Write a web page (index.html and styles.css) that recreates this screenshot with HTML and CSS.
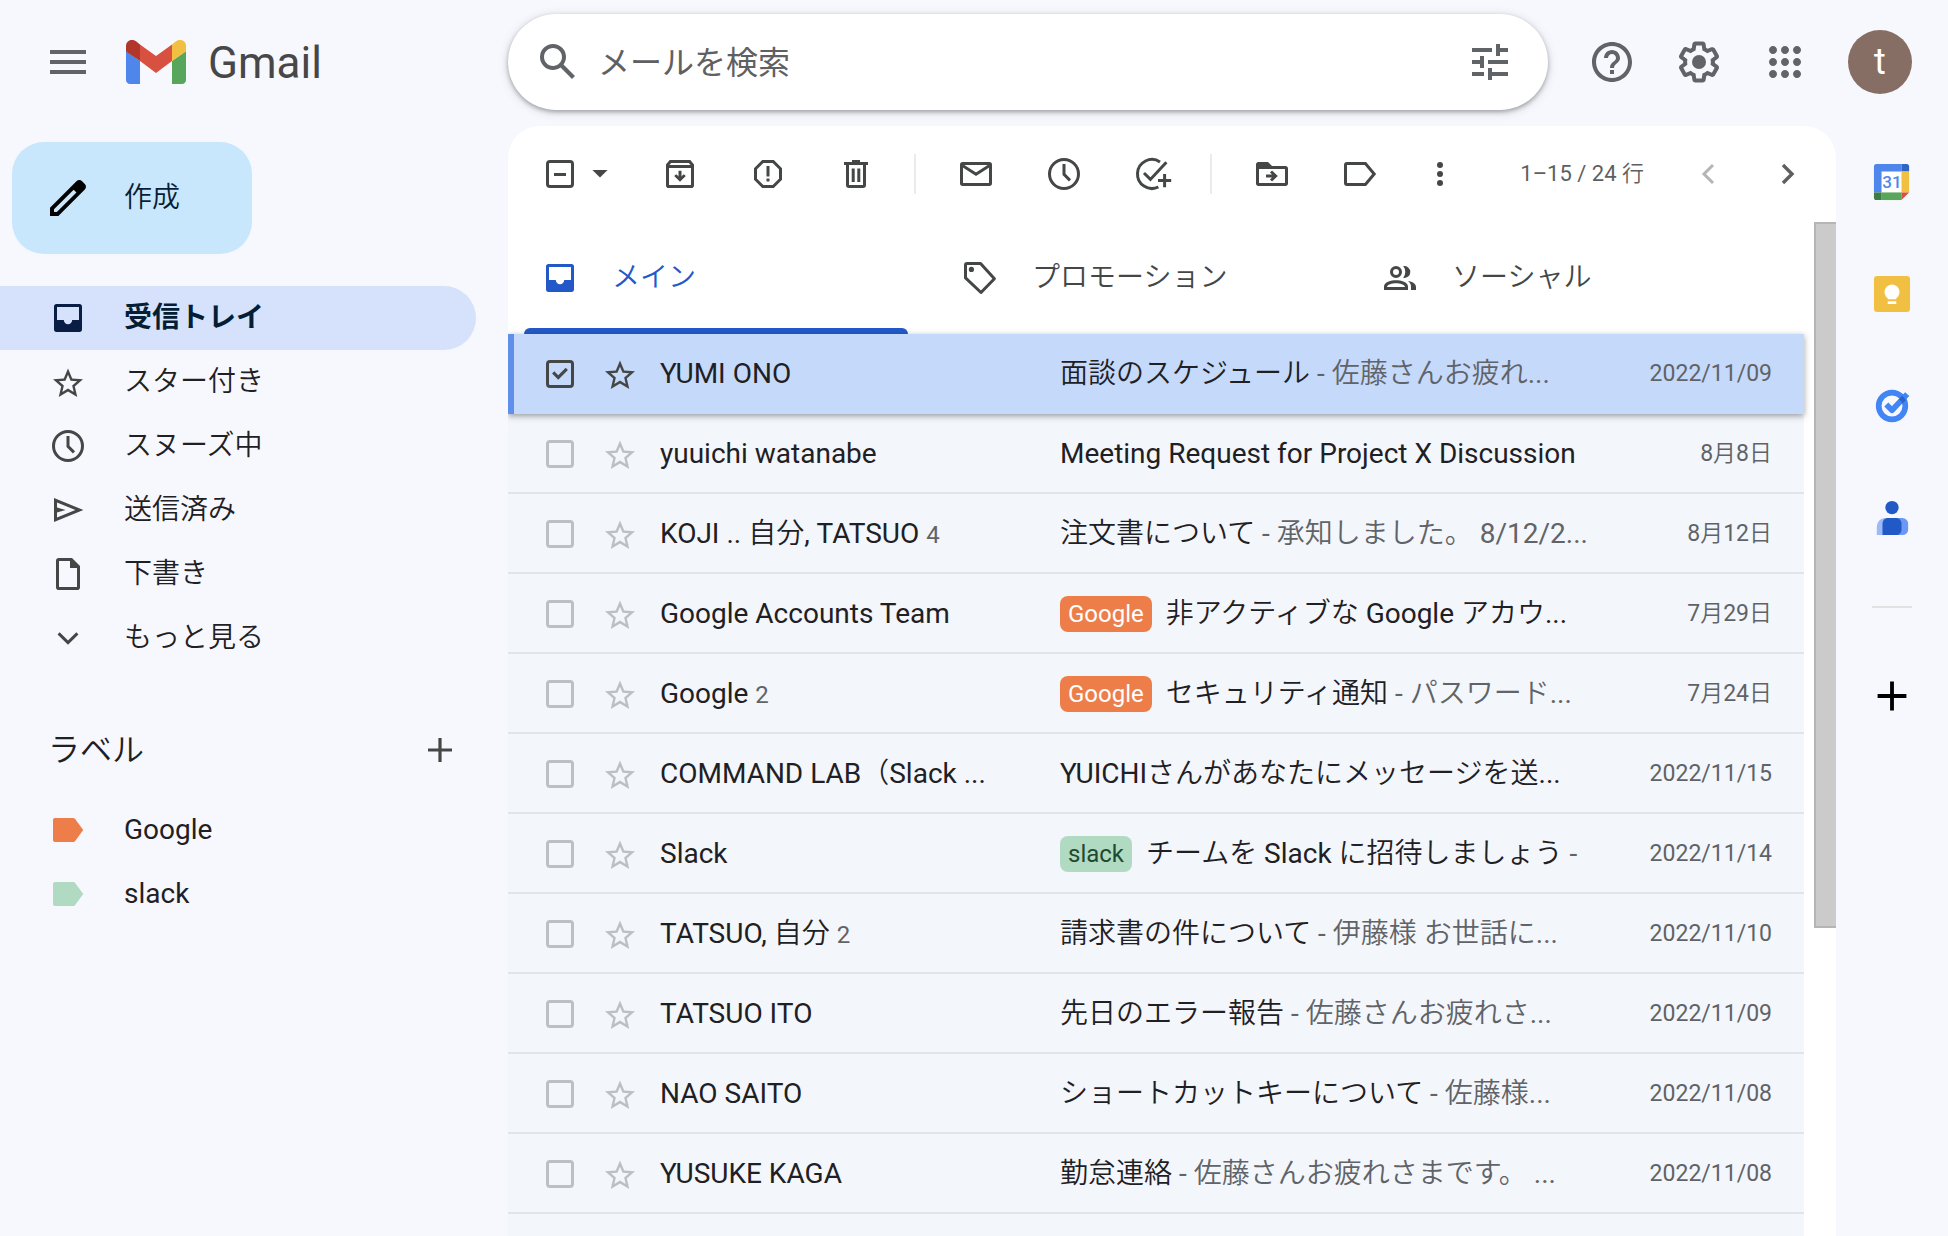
FILE: index.html
```html
<!DOCTYPE html>
<html lang="ja">
<head>
  <meta charset="UTF-8">
  <meta name="viewport" content="width=device-width, initial-scale=1.0">
  <title>Gmail</title>
  <link rel="stylesheet" href="styles.css">
</head>
<body>

<!-- Icon sprite -->
<svg class="sprite" aria-hidden="true">
  <symbol id="i-menu" viewBox="0 0 24 24"><path d="M3 18h18v-2H3v2zm0-5h18v-2H3v2zm0-7v2h18V6H3z"/></symbol>
  <symbol id="i-pencil" viewBox="0 0 24 24"><path d="M20.41 4.94l-1.35-1.35c-.78-.78-2.05-.78-2.83 0L3 16.82V21h4.18L20.41 7.77c.79-.78.79-2.05 0-2.83zM6.41 19.06L5 19v-1.36l9.82-9.82 1.41 1.41-9.82 9.83z"/></symbol>
  <symbol id="i-search" viewBox="0 0 24 24"><path d="M20.49 19l-5.73-5.73C15.53 12.2 16 10.91 16 9.5A6.5 6.5 0 1 0 9.5 16c1.41 0 2.7-.47 3.77-1.24L19 20.49 20.49 19zM5 9.5C5 7.01 7.01 5 9.5 5S14 7.01 14 9.5 11.99 14 9.5 14 5 11.99 5 9.5z"/></symbol>
  <symbol id="i-tune" viewBox="0 0 24 24"><path d="M3 17v2h6v-2H3zM3 5v2h10V5H3zm10 16v-2h8v-2h-8v-2h-2v6h2zM7 9v2H3v2h4v2h2V9H7zm14 4v-2H11v2h10zm-6-4h2V7h4V5h-4V3h-2v6z"/></symbol>
  <symbol id="i-help" viewBox="0 0 24 24"><path d="M11 18h2v-2h-2v2zm1-16C6.48 2 2 6.48 2 12s4.48 10 10 10 10-4.48 10-10S17.52 2 12 2zm0 18c-4.41 0-8-3.59-8-8s3.59-8 8-8 8 3.59 8 8-3.59 8-8 8zm0-14c-2.21 0-4 1.79-4 4h2c0-1.1.9-2 2-2s2 .9 2 2c0 2-3 1.75-3 5h2c0-2.25 3-2.5 3-5 0-2.21-1.79-4-4-4z"/></symbol>
  <symbol id="i-gear" viewBox="0 0 24 24"><path d="M13.85 22.25h-3.7c-.74 0-1.36-.54-1.45-1.27l-.27-1.89c-.27-.14-.53-.29-.79-.46l-1.8.72c-.7.26-1.47-.03-1.81-.65L2.2 15.53c-.35-.66-.2-1.44.36-1.88l1.53-1.19c-.01-.15-.02-.3-.02-.46 0-.15.01-.31.02-.46l-1.52-1.19c-.59-.45-.74-1.26-.37-1.88l1.85-3.19c.34-.62 1.11-.9 1.79-.63l1.81.73c.26-.17.52-.32.78-.46l.27-1.91c.09-.7.71-1.25 1.44-1.25h3.7c.74 0 1.36.54 1.45 1.27l.27 1.89c.27.14.53.29.79.46l1.8-.72c.71-.26 1.48.03 1.82.65l1.84 3.18c.36.66.2 1.44-.36 1.88l-1.52 1.19c.01.15.02.3.02.46s-.01.31-.02.46l1.52 1.19c.56.45.72 1.23.37 1.86l-1.86 3.22c-.34.62-1.11.9-1.8.63l-1.8-.72c-.26.17-.52.32-.78.46l-.27 1.91c-.1.68-.72 1.22-1.46 1.22zm-3.23-2h2.76l.37-2.55.53-.22c.44-.18.88-.44 1.34-.78l.45-.34 2.38.96 1.38-2.4-2.03-1.58.07-.56c.03-.26.06-.51.06-.78s-.03-.53-.06-.78l-.07-.56 2.03-1.58-1.39-2.4-2.39.96-.45-.35c-.42-.32-.87-.58-1.33-.77l-.52-.22-.37-2.55h-2.76l-.37 2.55-.53.21c-.44.19-.88.44-1.34.79l-.45.33-2.38-.95-1.39 2.39 2.03 1.58-.07.56a7 7 0 0 0-.06.79c0 .26.02.53.06.78l.07.56-2.03 1.58 1.38 2.4 2.39-.96.45.35c.43.33.86.58 1.33.77l.53.22.38 2.55z"/><circle cx="12" cy="12" r="3.5"/></symbol>
  <symbol id="i-apps" viewBox="0 0 24 24"><path d="M6 8c1.1 0 2-.9 2-2s-.9-2-2-2-2 .9-2 2 .9 2 2 2zm6 12c1.1 0 2-.9 2-2s-.9-2-2-2-2 .9-2 2 .9 2 2 2zm-6 0c1.1 0 2-.9 2-2s-.9-2-2-2-2 .9-2 2 .9 2 2 2zm0-6c1.1 0 2-.9 2-2s-.9-2-2-2-2 .9-2 2 .9 2 2 2zm6 0c1.1 0 2-.9 2-2s-.9-2-2-2-2 .9-2 2 .9 2 2 2zm4-8c0 1.1.9 2 2 2s2-.9 2-2-.9-2-2-2-2 .9-2 2zm-4 2c1.1 0 2-.9 2-2s-.9-2-2-2-2 .9-2 2 .9 2 2 2zm6 6c1.1 0 2-.9 2-2s-.9-2-2-2-2 .9-2 2 .9 2 2 2zm0 6c1.1 0 2-.9 2-2s-.9-2-2-2-2 .9-2 2 .9 2 2 2z"/></symbol>

  <symbol id="i-inbox" viewBox="0 0 20 20"><path fill-rule="evenodd" d="M4.2 3h11.6c.7 0 1.2.5 1.2 1.2v11.6c0 .7-.5 1.2-1.2 1.2H4.2c-.7 0-1.2-.5-1.2-1.2V4.2C3 3.5 3.5 3 4.2 3zm.3 1.5V11h3.4a2.1 2.1 0 0 0 4.2 0h3.4V4.5z"/></symbol>
  <symbol id="i-star" viewBox="0 -1 24 24"><path d="M22 9.24l-7.19-.62L12 2 9.19 8.63 2 9.24l5.46 4.73L5.82 21 12 17.27 18.18 21l-1.63-7.03L22 9.24zM12 15.4l-3.76 2.27 1-4.28-3.32-2.88 4.38-.38L12 6.1l1.71 4.04 4.38.38-3.32 2.88 1 4.28L12 15.4z"/></symbol>
  <symbol id="i-clock" viewBox="0 0 20 20"><g fill="none" stroke="currentColor" stroke-width="1.5"><circle cx="10" cy="10" r="7.25"/><path d="M10 5v5.2l3 3"/></g></symbol>
  <symbol id="i-send" viewBox="0 0 20 20"><path fill-rule="evenodd" d="M3 16V4l14.7 6L3 16zm1.5-2.25L13.7 10 4.5 6.25v2.5L8.8 10l-4.3 1.25v2.5z"/></symbol>
  <symbol id="i-draft" viewBox="0 0 20 20"><path fill-rule="evenodd" d="M5.3 2H12l4 4v10.7c0 .7-.6 1.3-1.3 1.3H5.3C4.6 18 4 17.4 4 16.7V3.3C4 2.6 4.6 2 5.3 2zm.2 1.5v13h9V7H11V3.5z"/></symbol>
  <symbol id="i-down" viewBox="0 0 20 20"><path fill="none" stroke="currentColor" stroke-width="1.5" d="M5.3 7.7L10 12.3l4.7-4.6"/></symbol>
  <symbol id="i-left" viewBox="0 0 20 20"><path fill="none" stroke="currentColor" stroke-width="1.5" d="M12.5 5.5L8 10l4.5 4.5"/></symbol>
  <symbol id="i-right" viewBox="0 0 20 20"><path fill="none" stroke="currentColor" stroke-width="1.7" d="M7.5 5.5L12 10l-4.5 4.5"/></symbol>
  <symbol id="i-plus" viewBox="0 0 20 20"><path fill="none" stroke="currentColor" stroke-width="1.6" d="M10 4v12M4 10h12"/></symbol>
  <symbol id="i-tag" viewBox="0 0 20 20"><path d="M3.5 4h9c.5 0 .8.2 1.1.5L17.6 10l-4 5.5c-.3.3-.6.5-1.1.5h-9c-.6 0-1-.4-1-1V5c0-.6.4-1 1-1z"/></symbol>

  <symbol id="i-caret" viewBox="0 0 20 20"><path d="M6.2 8h7.6L10 11.8z"/></symbol>
  <symbol id="i-archive" viewBox="0 0 20 20"><g fill="none" stroke="currentColor" stroke-width="1.5"><path d="M3.75 5.5L5.2 3.75h9.6l1.45 1.75v10.1c0 .4-.25.65-.65.65H4.4c-.4 0-.65-.25-.65-.65z"/><path d="M3.5 6.3h13M10 8.4v4"/></g><path d="M7.1 11l1-.9L10 11.8l1.9-1.7 1 .9-2.9 2.9z"/></symbol>
  <symbol id="i-spam" viewBox="0 0 20 20"><path fill="none" stroke="currentColor" stroke-width="1.5" d="M7.4 3.75h5.2l3.65 3.65v5.2l-3.65 3.65H7.4L3.75 12.6V7.4z"/><path d="M9.25 6h1.5v5.2h-1.5zM9.25 12.2h1.5v1.5h-1.5z"/></symbol>
  <symbol id="i-trash" viewBox="0 0 20 20"><path fill="none" stroke="currentColor" stroke-width="1.5" d="M4 4.75h12M8 3.75h4M5.75 5v10.5c0 .5.25.75.75.75h7c.5 0 .75-.25.75-.75V5M8.6 7.2V14M11.4 7.2V14"/></symbol>
  <symbol id="i-mail" viewBox="0 0 20 20"><g fill="none" stroke="currentColor" stroke-width="1.5"><rect x="2.75" y="4.75" width="14.5" height="10.5" rx=".6"/><path d="M3 5.6l7 4.5 7-4.5"/></g></symbol>
  <symbol id="i-task-add" viewBox="0 0 20 20"><g fill="none" stroke="currentColor" stroke-width="1.5"><path d="M14 3.95A7.25 7.25 0 1 0 13.2 16.5M6 9.5l3.2 3.2 8-8.6M16.3 10v6.6M13 13.3h6.6"/></g></symbol>
  <symbol id="i-move" viewBox="0 0 20 20"><path fill-rule="evenodd" d="M3.2 4H8l2 2h6.8c.7 0 1.2.5 1.2 1.2v7.6c0 .7-.5 1.2-1.2 1.2H3.2c-.7 0-1.2-.5-1.2-1.2V5.2C2 4.5 2.5 4 3.2 4zm.3 3.5v7h13v-7z"/><path d="M7 10.25h3l-1-1 1-1L12.9 11 10 13.8l-1-1 1-1H7z"/></symbol>
  <symbol id="i-label" viewBox="0 0 20 20"><path fill="none" stroke="currentColor" stroke-width="1.5" d="M3.5 4.75h9.2L17.1 10l-4.4 5.25H3.5c-.5 0-.75-.25-.75-.75v-9c0-.5.25-.75.75-.75z"/></symbol>
  <symbol id="i-more" viewBox="0 0 20 20"><circle cx="10" cy="5.5" r="1.5"/><circle cx="10" cy="10" r="1.5"/><circle cx="10" cy="14.5" r="1.5"/></symbol>
  <symbol id="i-offer" viewBox="0 0 20 20"><path fill="none" stroke="currentColor" stroke-width="1.5" stroke-linejoin="round" d="M3.5 2.75h6.8l6.9 7.6-6.7 6.9-7.75-7.3V3.5c0-.5.25-.75.75-.75z"/><circle cx="5.7" cy="5.7" r="1.3"/></symbol>
  <symbol id="i-people" viewBox="0 0 20 20"><circle cx="8" cy="7" r="2.25" fill="none" stroke="currentColor" stroke-width="1.5"/><path d="M11.6 4.05A3 3 0 1 1 11.6 9.95 4.7 4.7 0 0 0 11.6 4.05z"/><path fill-rule="evenodd" d="M2 16v-1.8C2 12 5.5 11.1 8 11.1s6 .9 6 3.1V16zm1.5-1.5h9c0-1.2-2.6-1.9-4.5-1.9s-4.5.7-4.5 1.9zM14 11.5c2.2.4 4 1.3 4 2.9V16h-2.5v-1.8c0-1.1-.6-2-1.5-2.7z"/></symbol>
</svg>

<header class="header">
  <div class="brand">
    <button class="icon-btn" aria-label="メインメニュー"><svg class="icon-lg"><use href="#i-menu"/></svg></button>
    <a class="logo" href="#">
      <svg class="logo-mark" viewBox="0 0 60 44" aria-hidden="true">
        <path fill="#4f86ec" d="M4 44h10V21L0 11v29c0 2.2 1.8 4 4 4z"/>
        <path fill="#58a55c" d="M46 44h10c2.2 0 4-1.8 4-4V11L46 21z"/>
        <path fill="#f1bf42" d="M46 4.5V21l14-9.5V6c0-5-5.7-7.9-9.7-4.9z"/>
        <path fill="#d85140" d="M14 21V4.5L30 16 46 4.5V21L30 33z"/>
        <path fill="#b3362a" d="M0 6v5.5L14 21V4.5L9.7 1.1C5.6-1.9 0 1 0 6z"/>
      </svg>
      <span class="logo-text">Gmail</span>
    </a>
  </div>
  <form class="search" role="search">
    <button type="button" class="icon-btn" aria-label="検索"><svg class="icon-lg"><use href="#i-search"/></svg></button>
    <input class="search-input" type="text" placeholder="メールを検索" aria-label="メールを検索">
    <button type="button" class="icon-btn" aria-label="検索オプション"><svg class="icon-lg"><use href="#i-tune"/></svg></button>
  </form>
  <div class="header-actions">
    <button class="icon-btn" aria-label="サポート"><svg class="icon-lg"><use href="#i-help"/></svg></button>
    <button class="icon-btn" aria-label="設定"><svg class="icon-lg"><use href="#i-gear"/></svg></button>
    <button class="icon-btn" aria-label="Google アプリ"><svg class="icon-lg"><use href="#i-apps"/></svg></button>
    <button class="avatar">t</button>
  </div>
</header>

<div class="layout">
  <nav class="sidebar">
    <button class="compose"><svg class="icon-lg"><use href="#i-pencil"/></svg>作成</button>
    <ul class="nav-list">
      <li><a class="nav-item active" href="#"><svg class="icon"><use href="#i-inbox"/></svg>受信トレイ</a></li>
      <li><a class="nav-item" href="#"><svg class="icon icon-star"><use href="#i-star"/></svg>スター付き</a></li>
      <li><a class="nav-item" href="#"><svg class="icon"><use href="#i-clock"/></svg>スヌーズ中</a></li>
      <li><a class="nav-item" href="#"><svg class="icon"><use href="#i-send"/></svg>送信済み</a></li>
      <li><a class="nav-item" href="#"><svg class="icon"><use href="#i-draft"/></svg>下書き</a></li>
      <li><a class="nav-item" href="#"><svg class="icon"><use href="#i-down"/></svg>もっと見る</a></li>
    </ul>
    <div class="labels-head">
      <h2>ラベル</h2>
      <button class="icon-btn" aria-label="新しいラベルを作成"><svg class="icon"><use href="#i-plus"/></svg></button>
    </div>
    <ul class="nav-list">
      <li><a class="nav-item" href="#"><svg class="icon tag-orange"><use href="#i-tag"/></svg>Google</a></li>
      <li><a class="nav-item" href="#"><svg class="icon tag-green"><use href="#i-tag"/></svg>slack</a></li>
    </ul>
  </nav>

  <main class="card">
    <div class="toolbar">
      <div class="select-all">
        <input class="check check-partial" type="checkbox" aria-label="選択">
        <button class="caret-btn" aria-label="選択メニュー"><svg class="icon"><use href="#i-caret"/></svg></button>
      </div>
      <div class="tool-group">
        <button class="tool" aria-label="アーカイブ"><svg class="icon"><use href="#i-archive"/></svg></button>
        <button class="tool" aria-label="迷惑メールを報告"><svg class="icon"><use href="#i-spam"/></svg></button>
        <button class="tool" aria-label="削除"><svg class="icon"><use href="#i-trash"/></svg></button>
      </div>
      <div class="tool-group">
        <button class="tool" aria-label="未読にする"><svg class="icon"><use href="#i-mail"/></svg></button>
        <button class="tool" aria-label="スヌーズ"><svg class="icon"><use href="#i-clock"/></svg></button>
        <button class="tool" aria-label="ToDo リストに追加"><svg class="icon"><use href="#i-task-add"/></svg></button>
      </div>
      <div class="tool-group">
        <button class="tool" aria-label="移動"><svg class="icon"><use href="#i-move"/></svg></button>
        <button class="tool" aria-label="ラベル"><svg class="icon"><use href="#i-label"/></svg></button>
        <button class="tool tool-narrow" aria-label="その他"><svg class="icon"><use href="#i-more"/></svg></button>
      </div>
      <div class="pager">
        <span>1–15 / 24 行</span>
        <button class="tool" aria-label="前" disabled><svg class="icon"><use href="#i-left"/></svg></button>
        <button class="tool" aria-label="次"><svg class="icon"><use href="#i-right"/></svg></button>
      </div>
    </div>

    <div class="scroll-area">
      <div class="list">
        <div class="tabs">
          <button class="tab active"><svg class="icon"><use href="#i-inbox"/></svg>メイン</button>
          <button class="tab"><svg class="icon"><use href="#i-offer"/></svg>プロモーション</button>
          <button class="tab"><svg class="icon"><use href="#i-people"/></svg>ソーシャル</button>
        </div>

        <table class="mails">
          <colgroup>
            <col class="col-check">
            <col class="col-star">
            <col class="col-sender">
            <col>
            <col class="col-date">
          </colgroup>
          <tbody>
          <tr class="mail selected">
            <td><input class="check" type="checkbox" aria-label="YUMI ONO" checked></td>
            <td><button class="star" aria-label="スター"><svg class="icon icon-star"><use href="#i-star"/></svg></button></td>
            <td>YUMI ONO</td>
            <td><a href="#">面談のスケジュール<span class="snippet"> - 佐藤さんお疲れ...</span></a></td>
            <td class="date">2022/11/09</td>
          </tr>
          <tr class="mail">
            <td><input class="check" type="checkbox" aria-label="yuuichi watanabe"></td>
            <td><button class="star" aria-label="スター"><svg class="icon icon-star"><use href="#i-star"/></svg></button></td>
            <td>yuuichi watanabe</td>
            <td><a href="#">Meeting Request for Project X Discussion</a></td>
            <td class="date">8月8日</td>
          </tr>
          <tr class="mail">
            <td><input class="check" type="checkbox" aria-label="KOJI"></td>
            <td><button class="star" aria-label="スター"><svg class="icon icon-star"><use href="#i-star"/></svg></button></td>
            <td>KOJI .. 自分, TATSUO <span class="count">4</span></td>
            <td><a href="#">注文書について<span class="snippet"> - 承知しました。 8/12/2...</span></a></td>
            <td class="date">8月12日</td>
          </tr>
          <tr class="mail">
            <td><input class="check" type="checkbox" aria-label="Google Accounts Team"></td>
            <td><button class="star" aria-label="スター"><svg class="icon icon-star"><use href="#i-star"/></svg></button></td>
            <td>Google Accounts Team</td>
            <td><a href="#"><span class="chip chip-orange">Google</span>非アクティブな Google アカウ...</a></td>
            <td class="date">7月29日</td>
          </tr>
          <tr class="mail">
            <td><input class="check" type="checkbox" aria-label="Google"></td>
            <td><button class="star" aria-label="スター"><svg class="icon icon-star"><use href="#i-star"/></svg></button></td>
            <td>Google <span class="count">2</span></td>
            <td><a href="#"><span class="chip chip-orange">Google</span>セキュリティ通知<span class="snippet"> - パスワード...</span></a></td>
            <td class="date">7月24日</td>
          </tr>
          <tr class="mail">
            <td><input class="check" type="checkbox" aria-label="COMMAND LAB"></td>
            <td><button class="star" aria-label="スター"><svg class="icon icon-star"><use href="#i-star"/></svg></button></td>
            <td>COMMAND LAB（Slack ...</td>
            <td><a href="#">YUICHIさんがあなたにメッセージを送...</a></td>
            <td class="date">2022/11/15</td>
          </tr>
          <tr class="mail">
            <td><input class="check" type="checkbox" aria-label="Slack"></td>
            <td><button class="star" aria-label="スター"><svg class="icon icon-star"><use href="#i-star"/></svg></button></td>
            <td>Slack</td>
            <td><a href="#"><span class="chip chip-green">slack</span>チームを Slack に招待しましょう<span class="snippet"> -</span></a></td>
            <td class="date">2022/11/14</td>
          </tr>
          <tr class="mail">
            <td><input class="check" type="checkbox" aria-label="TATSUO, 自分"></td>
            <td><button class="star" aria-label="スター"><svg class="icon icon-star"><use href="#i-star"/></svg></button></td>
            <td>TATSUO, 自分 <span class="count">2</span></td>
            <td><a href="#">請求書の件について<span class="snippet"> - 伊藤様 お世話に...</span></a></td>
            <td class="date">2022/11/10</td>
          </tr>
          <tr class="mail">
            <td><input class="check" type="checkbox" aria-label="TATSUO ITO"></td>
            <td><button class="star" aria-label="スター"><svg class="icon icon-star"><use href="#i-star"/></svg></button></td>
            <td>TATSUO ITO</td>
            <td><a href="#">先日のエラー報告<span class="snippet"> - 佐藤さんお疲れさ...</span></a></td>
            <td class="date">2022/11/09</td>
          </tr>
          <tr class="mail">
            <td><input class="check" type="checkbox" aria-label="NAO SAITO"></td>
            <td><button class="star" aria-label="スター"><svg class="icon icon-star"><use href="#i-star"/></svg></button></td>
            <td>NAO SAITO</td>
            <td><a href="#">ショートカットキーについて<span class="snippet"> - 佐藤様...</span></a></td>
            <td class="date">2022/11/08</td>
          </tr>
          <tr class="mail">
            <td><input class="check" type="checkbox" aria-label="YUSUKE KAGA"></td>
            <td><button class="star" aria-label="スター"><svg class="icon icon-star"><use href="#i-star"/></svg></button></td>
            <td>YUSUKE KAGA</td>
            <td><a href="#">勤怠連絡<span class="snippet"> - 佐藤さんお疲れさまです。 ...</span></a></td>
            <td class="date">2022/11/08</td>
          </tr>
          </tbody>
        </table>
        <div class="list-rest"></div>
      </div>
      <div class="scrollbar"><div class="thumb"></div></div>
    </div>
  </main>

  <aside class="apps">
    <a class="app" href="#" aria-label="カレンダー">
      <svg class="icon" viewBox="0 0 40 40">
        <path fill="#fff" d="M8 8h23v23H8z"/>
        <path fill="#4f86ec" d="M3.5 1H30v8H9v22H1V3.5C1 2 2 1 3.5 1z"/>
        <path fill="#2f66c5" d="M30 1h5.5C37 1 38 2 38 3.5V9h-8z"/>
        <path fill="#f1bf42" d="M30 9h8v22h-8z"/>
        <path fill="#58a55c" d="M9 31h21v8H9z"/>
        <path fill="#3d7d40" d="M1 31h8v8H3.5C2 39 1 38 1 36.5z"/>
        <path fill="#d85140" d="M30 31h8l-8 8z"/>
        <text class="cal-day" x="20" y="26" text-anchor="middle">31</text>
      </svg>
    </a>
    <a class="app" href="#" aria-label="Keep">
      <svg class="icon" viewBox="0 0 40 40">
        <rect x="1" y="1" width="38" height="38" rx="3.5" fill="#f1bf42"/>
        <path fill="#fff" d="M20 10a8 8 0 0 0-4.5 14.5v1h9v-1A8 8 0 0 0 20 10zM15.5 27.5h9v3h-9z"/>
      </svg>
    </a>
    <a class="app" href="#" aria-label="ToDo リスト">
      <svg class="icon" viewBox="0 0 40 40">
        <circle cx="20" cy="20" r="14" fill="none" stroke="#4285f4" stroke-width="6"/>
        <path fill="none" stroke="#4285f4" stroke-width="6" stroke-linejoin="round" d="M14 18.5l6 6L36 7.5"/>
        <path fill="#2d64c8" d="M27.3 12.8l3.4-3.6a17 17 0 0 1 3.8 4.7L31.2 17.4A13 13 0 0 0 27.3 12.8z"/>
      </svg>
    </a>
    <a class="app" href="#" aria-label="連絡先">
      <svg class="icon" viewBox="0 0 40 40">
        <path fill="#9db9f8" d="M4 38V30c0-6 4-10 9-10h11v18z"/>
        <rect x="14" y="20" width="23" height="18" rx="6" fill="#6c98f5"/>
        <path fill="#2159c7" d="M10 38V26c0-3.500 2.500-6 6-6h8c3.500 0 6 2.500 6 6v6c0 3.500-2.500 6-6 6z"/>
        <circle cx="20" cy="9" r="7" fill="#2159c7"/>
      </svg>
    </a>
    <hr>
    <button class="app app-add" aria-label="アドオンを取得"><svg class="icon-lg"><use href="#i-plus"/></svg></button>
  </aside>
</div>

<script>
  // "some selected" state of the toolbar checkbox
  document.querySelector('.check-partial').indeterminate = true;
</script>
</body>
</html>
```
FILE: styles.css
```css
* {
  box-sizing: border-box;
}

body {
  margin: 0;
  height: 100vh;
  overflow: hidden;
  display: flex;
  flex-direction: column;
  font-family: Roboto, "Noto Sans CJK JP DemiLight", "Noto Sans CJK JP", sans-serif;
  font-size: 28px;
  line-height: 40px;
  color: #1f2023;
  background-color: #f7f8fd;
}

button {
  border: none;
  padding: 0;
  background: none;
  color: inherit;
  font: inherit;
  cursor: pointer;
  display: flex;
  align-items: center;
}

a {
  color: inherit;
  text-decoration: none;
}

svg {
  fill: currentColor;
  display: block;
  flex: none;
}

.sprite {
  display: none;
}

.icon {
  width: 40px;
  height: 40px;
}

.icon-star {
  width: 36px;
  height: 36px;
  margin: 0 2px;
}

.icon-lg {
  width: 48px;
  height: 48px;
}

.icon-btn {
  justify-content: center;
  width: 80px;
  height: 80px;
  flex: none;
  color: #606368;
}

/* Header */
.header {
  display: flex;
  align-items: center;
  height: 126px;
  padding-bottom: 2px;
  flex: none;
}

.brand {
  display: flex;
  align-items: center;
  width: 508px;
  padding-left: 28px;
  flex: none;
}

.logo {
  display: flex;
  align-items: center;
  gap: 22px;
  margin-left: 18px;
}

.logo-mark {
  width: 60px;
  height: 44px;
}

.logo-text {
  padding-top: 2px;
  font-size: 44px;
  color: #474747;
}

.search {
  flex: 1;
  display: flex;
  align-items: center;
  height: 96px;
  padding: 0 18px 0 10px;
  border-radius: 48px;
  background-color: #fff;
  box-shadow: 0 2px 4px rgba(60, 64, 67, 0.4), 0 2px 8px 2px rgba(60, 64, 67, 0.12);
}

.search-input {
  flex: 1;
  min-width: 0;
  border: none;
  outline: none;
  padding: 2px 0 0;
  background: none;
  font: inherit;
  font-family: Roboto, "Noto Sans CJK JP", sans-serif;
  font-size: 32px;
}

.search-input::placeholder {
  color: #5f6062;
  opacity: 1;
}

.header-actions {
  display: flex;
  align-items: center;
  justify-content: space-between;
  width: 400px;
  padding: 0 36px 0 24px;
  flex: none;
}

.avatar {
  justify-content: center;
  width: 64px;
  height: 64px;
  margin-left: 16px;
  border-radius: 50%;
  background-color: #876e64;
  color: #fff;
  font-size: 36px;
}

/* Page columns */
.layout {
  flex: 1;
  min-height: 0;
  display: grid;
  grid-template-columns: 508px 1fr 112px;
}

/* Sidebar */
.compose {
  gap: 32px;
  width: 240px;
  height: 112px;
  margin: 16px 0 32px 12px;
  padding-left: 32px;
  border-radius: 32px;
  background-color: #c8e7fc;
  color: #0b1d35;
}

.compose svg {
  color: #000;
}

.nav-list {
  list-style: none;
  margin: 0;
  padding: 0 32px 0 0;
}

.nav-item {
  display: flex;
  align-items: center;
  gap: 36px;
  height: 64px;
  padding-left: 48px;
  border-radius: 0 32px 32px 0;
}

.nav-item svg {
  color: #444746;
}

.nav-item.active {
  background-color: #d6e1fb;
  color: #041e35;
  font-family: Roboto, "Noto Sans CJK JP", sans-serif;
  font-weight: bold;
}

.nav-item.active svg {
  color: #0a1d45;
}

.nav-item .tag-orange {
  color: #ed7e4a;
}

.nav-item .tag-green {
  color: #b0dac2;
}

.labels-head {
  display: flex;
  align-items: center;
  justify-content: space-between;
  height: 80px;
  margin: 40px 28px 8px 48px;
}

.labels-head h2 {
  margin: 0;
  font-size: 32px;
  font-weight: normal;
}

.labels-head .icon-btn {
  color: #444746;
}

/* Mail card */
.card {
  display: flex;
  flex-direction: column;
  min-width: 0;
  min-height: 0;
  overflow: hidden;
  border-radius: 32px 32px 0 0;
  background-color: #fff;
}

.toolbar {
  display: flex;
  align-items: center;
  height: 96px;
  padding: 0 8px 0 38px;
  flex: none;
  color: #444746;
}

.select-all {
  display: flex;
  align-items: center;
  gap: 6px;
  margin-right: 16px;
}

.tool-group {
  display: flex;
}

.tool-group + .tool-group::before {
  content: "";
  width: 2px;
  height: 40px;
  margin: 24px 16px 24px 14px;
  background-color: #ebebeb;
}

.tool {
  justify-content: center;
  width: 88px;
  height: 88px;
}

.tool-narrow {
  width: 72px;
}

.tool:disabled {
  color: #b4b5b5;
}

.pager {
  display: flex;
  align-items: center;
  margin-left: auto;
  font-size: 22px;
  color: #5e5f60;
}

.pager span {
  margin-right: 24px;
}

.pager .tool {
  width: 80px;
}

.scroll-area {
  flex: 1;
  min-height: 0;
  display: flex;
  gap: 10px;
}

.list {
  flex: 1;
  min-width: 0;
  display: flex;
  flex-direction: column;
}

.scrollbar {
  width: 22px;
}

.thumb {
  height: calc(100% - 308px);
  border: 2px solid #b5b5b5;
  border-right: none;
  background-color: #cbcbcb;
}

/* Tabs */
.tabs {
  display: flex;
  height: 112px;
  flex: none;
}

.tab {
  gap: 32px;
  width: 420px;
  padding-left: 32px;
  color: #444746;
  position: relative;
}

.tab.active {
  color: #2258c8;
}

.tab.active::after {
  content: "";
  position: absolute;
  left: 16px;
  right: 20px;
  bottom: 0;
  height: 6px;
  border-radius: 6px 6px 0 0;
  background-color: #2258c8;
}

/* Mail rows */
.mails {
  width: 100%;
  table-layout: fixed;
  border-collapse: separate;
  border-spacing: 0;
}

.col-check {
  width: 78px;
}

.col-star {
  width: 74px;
}

.col-sender {
  width: 400px;
}

.col-date {
  width: 180px;
}

.mail td {
  height: 80px;
  padding: 2px 0 0;
  border-bottom: 2px solid #e1e5ea;
  background-color: #f3f6fb;
  white-space: nowrap;
}

.mail td:first-child {
  padding-left: 38px;
}

.mail a {
  display: flex;
  align-items: center;
  white-space: pre;
}

.mail .star {
  margin-left: 14px;
  color: #bcc0c3;
}

.mail .count {
  font-size: 24px;
  color: #606368;
}

.mail .snippet {
  color: #606368;
}

.mail .date {
  padding-right: 32px;
  text-align: right;
  font-size: 23px;
  color: #5f6368;
}

.mail.selected {
  position: relative;
  box-shadow: 0 2px 6px rgba(60, 64, 67, 0.5);
}

.mail.selected td {
  padding-top: 0;
  border-bottom: none;
  background-color: #c5d9fb;
}

.mail.selected td:first-child {
  box-shadow: inset 6px 0 0 #5f8fea;
}

.mail.selected .star {
  color: #444746;
}

.list-rest {
  flex: 1;
  background-color: #f3f6fb;
}

.chip {
  margin-right: 14px;
  padding: 0 8px;
  border-radius: 8px;
  font-size: 24px;
  line-height: 36px;
}

.chip-orange {
  background-color: #ed7e4a;
  color: #fff;
}

.chip-green {
  background-color: #b0dac2;
  color: #1f4a30;
}

/* Checkboxes */
.check {
  appearance: none;
  display: block;
  width: 28px;
  height: 28px;
  margin: 0;
  border: 3px solid #bcc0c3;
  border-radius: 4px;
}

.check:checked,
.check:indeterminate {
  border-color: #444746;
}

.check:checked::before {
  content: "";
  display: block;
  width: 22px;
  height: 22px;
  background-color: #444746;
  clip-path: polygon(14% 48%, 24% 38%, 42% 56%, 76% 22%, 86% 32%, 42% 76%);
}

.check:indeterminate::before {
  content: "";
  display: block;
  width: 12px;
  height: 3px;
  margin: 10px 5px;
  background-color: #444746;
}

/* Side panel */
.apps {
  display: flex;
  flex-direction: column;
  align-items: center;
}

.app {
  display: flex;
  justify-content: center;
  align-items: center;
  width: 112px;
  height: 112px;
}

.apps .icon {
  width: 38px;
  height: 38px;
}

.apps hr {
  width: 40px;
  height: 2px;
  margin: 32px 0;
  border: none;
  background-color: #e1e3e1;
}

.app-add {
  color: #000;
}

.cal-day {
  font-size: 18px;
  font-weight: 500;
  fill: #4f86ec;
}
```
